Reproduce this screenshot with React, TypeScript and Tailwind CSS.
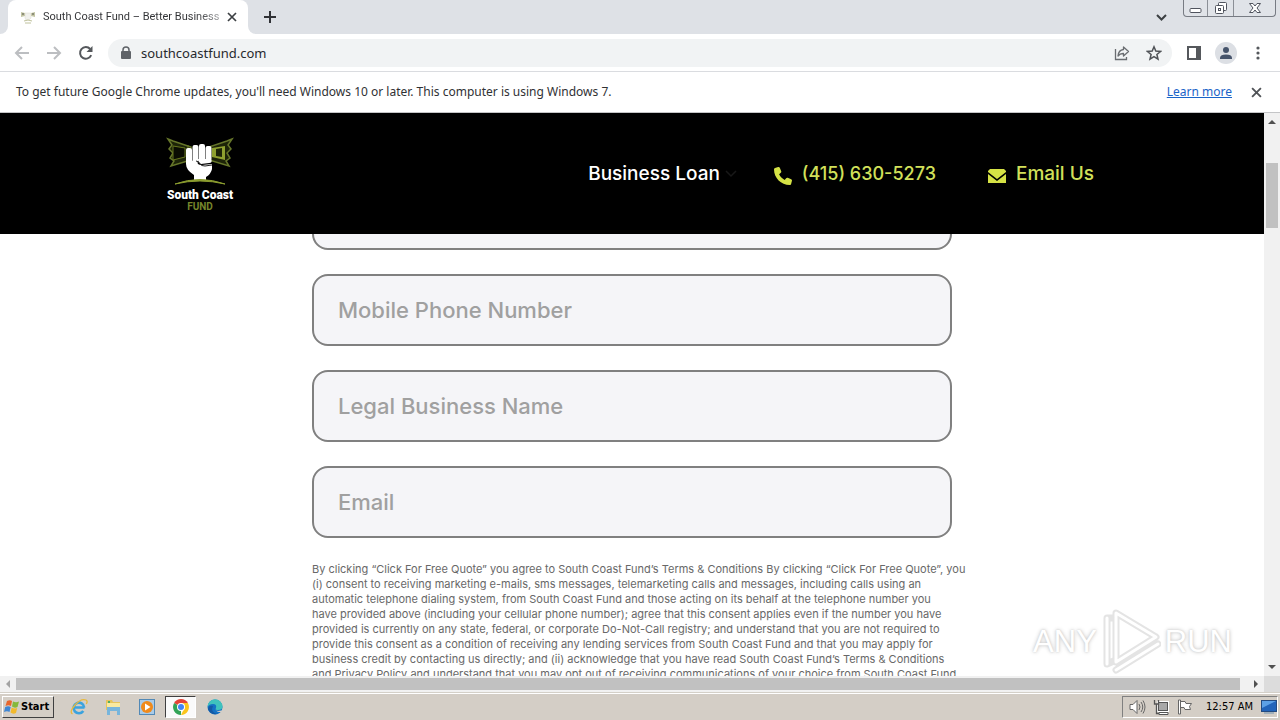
import type { ReactNode } from "react";

const consentLines = [
  "By clicking “Click For Free Quote” you agree to South Coast Fund’s Terms & Conditions By clicking “Click For Free Quote”, you",
  "(i) consent to receiving marketing e-mails, sms messages, telemarketing calls and messages, including calls using an",
  "automatic telephone dialing system, from South Coast Fund and those acting on its behalf at the telephone number you",
  "have provided above (including your cellular phone number); agree that this consent applies even if the number you have",
  "provided is currently on any state, federal, or corporate Do-Not-Call registry; and understand that you are not required to",
  "provide this consent as a condition of receiving any lending services from South Coast Fund and that you may apply for",
  "business credit by contacting us directly; and (ii) acknowledge that you have read South Coast Fund’s Terms & Conditions",
  "and Privacy Policy and understand that you may opt out of receiving communications of your choice from South Coast Fund",
];

function IconButton({ label, className = "", children }: { label: string; className?: string; children: ReactNode }) {
  return (
    <button type="button" aria-label={label} className={`flex shrink-0 items-center justify-center ${className}`}>
      {children}
    </button>
  );
}

function Cross({ size, color }: { size: number; color: string }) {
  return (
    <svg width={size} height={size} viewBox="0 0 10 10" fill="none" stroke={color} strokeWidth="1.7">
      <path d="M1 1l8 8M9 1L1 9" />
    </svg>
  );
}

function TabStrip() {
  return (
    <div className="flex h-[34px] shrink-0 items-start bg-[#dee1e6]">
      <div className="flex h-[34px] w-2 shrink-0 items-end bg-white">
        <div className="h-[34px] w-2 rounded-br-lg bg-[#dee1e6]" />
      </div>
      <div className="flex h-[34px] w-60 shrink-0 items-center rounded-t-lg bg-white pr-[6px] pl-3">
        <svg className="shrink-0" width="16" height="16" viewBox="0 0 16 16">
          <path d="M1 3l4 1v3L1 8zM15 3l-4 1v3l4 1z" fill="#c3c5a4" />
          <path d="M2 4h2v2H2zM12 4h2v2h-2z" fill="#8d8f7a" />
          <path d="M5 4h6v5l-2 2H6L5 9z" fill="#f1f1ed" stroke="#d9dbce" strokeWidth=".5" />
          <path d="M4 12q4-2 8 0M5 14h6" stroke="#c0c29d" fill="none" />
        </svg>
        <span className="ml-[7px] min-w-0 flex-1 bg-linear-to-r from-[#303134] from-85% to-[#b0b1b3] bg-clip-text font-['Roboto','Liberation_Sans',sans-serif] text-[11px] leading-4 whitespace-nowrap text-transparent">
          South Coast Fund – Better Business
        </span>
        <IconButton label="Close tab" className="size-5">
          <Cross size={10} color="#3c4043" />
        </IconButton>
      </div>
      <div className="flex h-[34px] w-2 shrink-0 bg-white">
        <div className="h-[34px] w-2 rounded-bl-lg bg-[#dee1e6]" />
      </div>
      <IconButton label="New tab" className="h-[34px] w-7">
        <svg width="12" height="12" viewBox="0 0 12 12" stroke="#303236" strokeWidth="2">
          <path d="M6 0v12M0 6h12" />
        </svg>
      </IconButton>
      <div className="flex-1" />
      <IconButton label="Search tabs" className="h-[34px] w-7">
        <svg width="11" height="7" viewBox="0 0 11 7" fill="none" stroke="#3c4043" strokeWidth="2">
          <path d="M1 1l4.500 4.500L10 1" />
        </svg>
      </IconButton>
      <div className="mr-1 ml-2 flex h-[17px] rounded-b border border-t-0 border-[#777b83] bg-[#e0e3e8]">
        <IconButton label="Minimize" className="w-6 border-r border-[#8b8f96]">
          <svg width="13" height="16" viewBox="0 0 13 16">
            <rect x="1" y="8.500" width="11" height="4" rx="1" fill="#fff" stroke="#50545e" />
          </svg>
        </IconButton>
        <IconButton label="Restore" className="w-[26px] border-r border-[#8b8f96]">
          <svg width="14" height="16" viewBox="0 0 14 16" fill="#fff" stroke="#50545e">
            <rect x="4.500" y="2.500" width="8" height="8" rx="1" />
            <rect x="1.500" y="5.500" width="8" height="8" rx="1" />
            <rect x="4.500" y="8.500" width="2" height="2" />
          </svg>
        </IconButton>
        <IconButton label="Close" className="w-[41px]">
          <svg width="14" height="16" viewBox="0 0 14 16" fill="#fff" stroke="#50545e">
            <path d="M1.500 3.500h3.500l2 2.500 2-2.500h3.500L9 8l3.500 4.500H9L7 10l-2 2.500H1.500L5 8z" />
          </svg>
        </IconButton>
      </div>
    </div>
  );
}

function Toolbar() {
  return (
    <div className="flex h-[38px] shrink-0 items-center border-b border-[#dadce0] bg-white pr-3 pl-[14px]">
      <IconButton label="Back" className="size-4">
        <svg width="16" height="14" viewBox="0 0 16 14" fill="none" stroke="#bcbec1" strokeWidth="2">
          <path d="M15 7H2M8 1L2 7l6 6" />
        </svg>
      </IconButton>
      <IconButton label="Forward" className="ml-4 size-4">
        <svg width="16" height="14" viewBox="0 0 16 14" fill="none" stroke="#bcbec1" strokeWidth="2">
          <path d="M1 7h13M8 1l6 6-6 6" />
        </svg>
      </IconButton>
      <IconButton label="Reload" className="ml-4 size-4">
        <svg width="16" height="16" viewBox="0 0 16 16">
          <path d="M13.200 10.200A5.800 5.800 0 1 1 12.200 4" fill="none" stroke="#55585c" strokeWidth="2" />
          <path d="M14.500 1v6h-6z" fill="#55585c" />
        </svg>
      </IconButton>
      <div className="ml-[14px] flex h-7 flex-1 items-center rounded-full bg-[#f1f3f4] pr-[10px] pl-3">
        <svg width="12" height="14" viewBox="0 0 12 14">
          <path d="M3 6V4a3 3 0 0 1 6 0v2" fill="none" stroke="#5f6368" strokeWidth="1.500" />
          <rect x="1" y="5" width="10" height="8" rx="1" fill="#5f6368" />
        </svg>
        <input
          aria-label="Address"
          defaultValue="southcoastfund.com"
          className="ml-[9px] min-w-0 flex-1 bg-transparent text-[13px] leading-5 text-[#27292d] outline-none"
        />
        <IconButton label="Share" className="size-4">
          <svg width="16" height="16" viewBox="0 0 16 16" fill="none" stroke="#6a6d71" strokeWidth="1.300">
            <path d="M1.500 4v10.500h11V12" />
            <path d="M9.500 2l5 4.500-5 4.500V8.500Q6 8.300 4 11q.5-6 5.500-6.500z" strokeLinejoin="round" />
          </svg>
        </IconButton>
        <IconButton label="Bookmark" className="ml-4 size-4">
          <svg width="16" height="16" viewBox="0 0 16 16" fill="none" stroke="#505357" strokeWidth="1.500">
            <path d="M8 1.800l1.800 4.300 4.700.4-3.600 3 1.100 4.600L8 11.600l-4 2.500 1.100-4.600-3.600-3 4.700-.4z" />
          </svg>
        </IconButton>
      </div>
      <IconButton label="Side panel" className="ml-[14px] size-4">
        <svg width="16" height="16" viewBox="0 0 16 16">
          <rect x="2" y="2" width="12" height="12" fill="none" stroke="#55585c" strokeWidth="2" />
          <path d="M10 2h5v12h-5z" fill="#55585c" />
        </svg>
      </IconButton>
      <IconButton label="Profile" className="ml-[13px] size-[22px] rounded-full bg-[#dcdfe4]">
        <svg width="14" height="14" viewBox="0 0 14 14" fill="#46546b">
          <circle cx="7" cy="4" r="3" />
          <path d="M1 13v-1.500Q1.500 8.500 7 8.500t6 3V13z" />
        </svg>
      </IconButton>
      <IconButton label="Menu" className="ml-[11px] size-5">
        <svg width="4" height="14" viewBox="0 0 4 14" fill="#55585c">
          <circle cx="2" cy="2" r="1.600" />
          <circle cx="2" cy="7" r="1.600" />
          <circle cx="2" cy="12" r="1.600" />
        </svg>
      </IconButton>
    </div>
  );
}

function InfoBar() {
  return (
    <div className="flex h-[41px] shrink-0 items-center border-b border-[#c4c5c7] bg-white pr-[14px] pl-4 text-[12px] text-[#303134]">
      <p className="flex-1 whitespace-nowrap">
        To get future Google Chrome updates, you'll need Windows 10 or later. This computer is using Windows 7.
      </p>
      <a href="#learn" className="text-[#1a64c8] underline">
        Learn more
      </a>
      <IconButton label="Dismiss" className="ml-[14px] size-5">
        <Cross size={11} color="#505357" />
      </IconButton>
    </div>
  );
}

function Logo() {
  return (
    <a href="#home" className="flex w-20 flex-col items-center">
      <svg className="mt-[2px]" width="72" height="50" viewBox="0 0 72 50">
        <g fill="#1d2408" stroke="#66762a" strokeWidth="1.500">
          <path d="M4 2l5 2 18 6v13L7 29l3-5-4-3 3-5-4-4 3-4z" />
          <path d="M68 2l-5 2-18 6v13l20 6-3-5 4-3-3-5 4-4-3-4z" />
        </g>
        <path d="M9 9l12 2v9L9 23zM24 8v16" fill="#0a0c02" stroke="#67771e" />
        <path d="M48 11l13-2v14l-13-3z" fill="#8fa12f" />
        <path d="M52 12l6-1v9l-6-1z" fill="#1d2408" />
        <g fill="#fff">
          <rect x="22" y="11" width="6" height="15" rx="2" />
          <rect x="28.500" y="8" width="6" height="17" rx="2" />
          <rect x="35" y="7" width="6" height="17" rx="2" />
          <rect x="41.500" y="9" width="6" height="15" rx="2" />
          <path d="M22 23l12 1q-2 4 4 4l10-1v5q-1 5-6 8v3H30v-5q-8-5-8-11z" />
          <path d="M34 22h13q2 4-2 4l-8 1q-3-1-3-5z" />
        </g>
        <path d="M32 24q3 0 4 3 1 2 5 2l7-1" fill="none" stroke="#222" />
        <path d="M11 47Q36 38 61 47 36 41 11 47z" fill="#8b9c2f" stroke="#8b9c2f" />
      </svg>
      <span className="mt-[2px] font-['Roboto','Liberation_Sans',sans-serif] text-[12px] leading-3 font-black whitespace-nowrap text-white">South Coast</span>
      <span className="font-['Roboto','Liberation_Sans',sans-serif] text-[10px] leading-3 font-bold text-[#76862b]">FUND</span>
    </a>
  );
}

function SiteHeader() {
  return (
    <header className="flex h-[121px] shrink-0 items-center bg-black pr-[170px] pl-40 font-['Inter','Liberation_Sans',sans-serif] text-[19px] leading-6 font-medium">
      <Logo />
      <nav className="ml-auto flex items-center whitespace-nowrap">
        <a href="#loan" className="flex items-center gap-1 text-white">
          Business Loan
          <svg width="14" height="8" viewBox="0 0 14 8" fill="none" stroke="#181818" strokeWidth="1.500">
            <path d="M2 1l5 5 5-5" />
          </svg>
        </a>
        <a href="tel:4156305273" className="ml-9 flex items-center gap-[10px] text-[18px] text-[#d2e05a]">
          <svg className="mt-1" width="18" height="18" viewBox="0 0 512 512" fill="#d5e245">
            <path d="M164.900 24.600c-7.700-18.600-28-28.500-47.400-23.200l-88 24C12.100 30.200 0 46 0 64c0 247.400 200.600 448 448 448 18 0 33.800-12.100 38.600-29.500l24-88c5.300-19.400-4.600-39.700-23.200-47.400l-96-40c-16.300-6.800-35.200-2.100-46.300 11.600L304.700 368C234.300 334.700 177.300 277.700 144 207.300l49.300-40.300c13.700-11.200 18.400-30 11.600-46.300z" />
          </svg>
          (415) 630-5273
        </a>
        <a href="mailto:info@southcoastfund.com" className="ml-[52px] flex items-center gap-[10px] text-[#d2e05a]">
          <svg className="mt-1" width="18" height="14" viewBox="0 0 18 14" fill="#d5e245">
            <path d="M2 0h14l2 2v1L9 10 0 3V2zM0 5l9 7 9-7v9H0z" />
          </svg>
          Email Us
        </a>
      </nav>
    </header>
  );
}

function Field({ label, type = "text" }: { label: string; type?: string }) {
  return (
    <input
      type={type}
      aria-label={label}
      placeholder={label}
      className="block h-[72px] w-full shrink-0 rounded-2xl border-2 border-[#808080] bg-[#f5f5f8] px-6 text-[22px] font-medium text-[#333333] placeholder:text-[#a0a0a0]"
    />
  );
}

function LeadForm() {
  return (
    <main className="min-h-0 flex-1 overflow-hidden bg-white font-['Inter','Liberation_Sans',sans-serif]">
      <form className="mx-auto -mt-14 flex w-full max-w-[640px] flex-col gap-6">
        <Field label="" />
        <Field label="Mobile Phone Number" type="tel" />
        <Field label="Legal Business Name" />
        <Field label="Email" type="email" />
        <p className="text-[11px] leading-[15px] text-[#686868]">
          {consentLines.map((line) => (
            <span key={line} className="block whitespace-nowrap">
              {line}
            </span>
          ))}
        </p>
      </form>
    </main>
  );
}

function VerticalScrollbar() {
  return (
    <div className="flex w-4 shrink-0 flex-col items-center bg-[#f1f1f1]">
      <svg className="shrink-0" width="16" height="17" viewBox="0 0 16 17" fill="#505050">
        <path d="M4 11l4-4 4 4z" />
      </svg>
      <div className="mt-[33px] h-[65px] w-3 bg-[#c1c1c1]" />
      <svg className="mt-auto shrink-0" width="16" height="17" viewBox="0 0 16 17" fill="#505050">
        <path d="M4 6l4 4 4-4z" />
      </svg>
    </div>
  );
}

function HorizontalScrollbar() {
  return (
    <div className="flex h-4 shrink-0 items-center bg-[#f1f1f1]">
      <svg width="16" height="16" viewBox="0 0 16 16" fill="#a3a3a3">
        <path d="M10 4L6 8l4 4z" />
      </svg>
      <div className="mr-2 h-3 flex-1 bg-[#c1c1c1]" />
      <svg width="16" height="16" viewBox="0 0 16 16" fill="#505050">
        <path d="M6 4l4 4-4 4z" />
      </svg>
      <div className="h-4 w-4 bg-[#dcdcdc]" />
    </div>
  );
}

function Watermark() {
  return (
    <div
      aria-hidden="true"
      className="pointer-events-none absolute right-12 bottom-0 flex h-[70px] items-center gap-1 font-['Liberation_Sans',sans-serif] text-[31px] leading-none text-white [text-shadow:0_0_4px_#c4c4c4,0_0_2px_#d4d4d4]"
    >
      <span>ANY</span>
      <svg width="60" height="66" viewBox="0 0 60 66" fill="none" strokeLinejoin="round" strokeLinecap="round">
        <g stroke="#e4e4e4" strokeWidth="7">
          <path d="M15 54V5l40 24M13 10H6v46l9-4M15 62l42-26M55 29L15 54" />
        </g>
        <g stroke="#fff" strokeWidth="3">
          <path d="M15 54V5l40 24L15 54M6 10v46M15 62l42-26" />
        </g>
      </svg>
      <span>RUN</span>
    </div>
  );
}

function Taskbar() {
  return (
    <footer className="flex h-7 shrink-0 items-center border-t border-[#d4d0c8] bg-[#d4cec6] px-[2px] shadow-[inset_0_1px_0_#ffffff]">
      <button
        type="button"
        className="flex h-[22px] w-[52px] items-center gap-px border border-t-white border-r-[#404040] border-b-[#404040] border-l-white pl-[1px] font-['DejaVu_Sans_Condensed','DejaVu_Sans',sans-serif] text-[11px] leading-4 font-bold text-black"
      >
        <svg className="shrink-0" width="16" height="16" viewBox="0 0 16 16">
          <path d="M3 2q3-1.500 5 0L7 7Q4.500 5.500 1.500 7z" fill="#e8662c" />
          <path d="M9 2.500q3 1.500 6 0L13.500 8q-3 1.500-5.500-.5z" fill="#85b83b" />
          <path d="M1.200 8q3-1.500 5.500 0l-1.200 5Q3 11.500 0 13z" fill="#3f86d3" />
          <path d="M7.700 8.500q3 1.500 5.500.5l-1.200 5q-3 1.500-5.500-.5z" fill="#f2b92c" />
        </svg>
        Start
      </button>
      <div className="ml-[10px] flex items-center">
        <IconButton label="Internet Explorer" className="h-[22px] w-[30px]">
          <svg width="18" height="18" viewBox="0 0 18 18" fill="none">
            <path d="M14.500 9.500H5M14.200 9.500A5.300 5.300 0 1 0 13.300 13" stroke="#3ba3de" strokeWidth="2.600" />
            <path d="M2.500 16Q-1 14 5 7T16 2q2 1 .3 4" stroke="#e8b93c" strokeWidth="1.300" />
          </svg>
        </IconButton>
        <IconButton label="File Explorer" className="ml-[4px] h-[22px] w-[30px]">
          <svg width="18" height="18" viewBox="0 0 18 18">
            <path d="M2 2h6l1 2h7v8H2z" fill="#e5c45d" />
            <path d="M3 5h13v6H3z" fill="#f8e9a0" />
            <path d="M4 3h2v2H4z" fill="#52ad60" />
            <path d="M3 9h13v8h-3v-4H6v4H3z" fill="#77b5dc" />
          </svg>
        </IconButton>
        <IconButton label="Media Player" className="ml-[4px] h-[22px] w-[30px]">
          <svg width="16" height="16" viewBox="0 0 16 16">
            <rect x=".5" y=".5" width="15" height="15" fill="#a9cbe8" stroke="#5289b6" />
            <circle cx="8" cy="8" r="6" fill="#f08a1b" />
            <path d="M6 4.500L11.500 8 6 11.500z" fill="#fff" />
          </svg>
        </IconButton>
        <IconButton label="Chrome" className="ml-[3px] h-[22px] w-[31px] border border-t-[#404040] border-r-white border-b-white border-l-[#404040] bg-[#fafafa]">
          <svg width="16" height="16" viewBox="0 0 16 16">
            <path d="M8 8L1.100 4A8 8 0 0 1 14.900 4z" fill="#e54336" />
            <path d="M8 8L1.100 4A8 8 0 0 0 8 16z" fill="#33a457" />
            <path d="M8 8h4L8 16a8 8 0 0 0 6.900-12H8z" fill="#fbc51b" />
            <circle cx="8" cy="8" r="4" fill="#fff" />
            <circle cx="8" cy="8" r="3" fill="#4285f4" />
          </svg>
        </IconButton>
        <IconButton label="Edge" className="ml-[4px] h-[22px] w-[30px]">
          <svg width="16" height="16" viewBox="0 0 16 16">
            <circle cx="8" cy="8" r="7.500" fill="#1471c4" />
            <path d="M.5 8A7.500 7.500 0 0 1 15.500 7.500Q15.500 11 11 11q-3 0-2-2 1-4-3-4-4 0-5.500 3z" fill="#3fc2bd" />
            <path d="M6 7q-3 6 4 8Q3 16 1 10q1-4 5-3z" fill="#1459a5" />
            <path d="M8.500 9q-1 4 6 2.500l1.500 1.500-4 0Q8 12 8.500 9z" fill="#d4cec6" />
          </svg>
        </IconButton>
      </div>
      <div className="ml-auto flex h-[22px] items-center border border-t-[#808080] border-r-white border-b-white border-l-[#808080] pl-[6px]">
        <svg width="17" height="16" viewBox="0 0 17 16" fill="#fff" stroke="#666">
          <path d="M1 5.500h3l4-4v13l-4-4H1z" />
          <path d="M10 5q2 3 0 6M12 3q3.500 5 0 10M14 1.500q4 6.500 0 13" fill="none" />
        </svg>
        <svg className="ml-[7px]" width="16" height="16" viewBox="0 0 16 16" fill="#fff" stroke="#555">
          <rect x="5.500" y="3.500" width="9" height="8" fill="#a8a8a8" stroke="#fff" strokeWidth="3" />
          <rect x="5.500" y="3.500" width="9" height="8" fill="#a8a8a8" />
          <path d="M6 13.500h9v2H6z" />
          <path d="M1.500 1v4h4V1M3.500 5v9.500H6" fill="none" strokeWidth="1.300" />
        </svg>
        <svg className="ml-2" width="16" height="16" viewBox="0 0 16 16" fill="#fff" stroke="#666">
          <path d="M3.500 2.500H8l1 2h5.500l-2 3 1 3H8l-1-2H3.500z" />
          <path d="M1.500 1h2v14h-2z" />
        </svg>
        <time className="ml-[13px] font-['DejaVu_Sans_Condensed','DejaVu_Sans',sans-serif] text-[11px] leading-4 whitespace-nowrap text-black">12:57 AM</time>
        <svg className="ml-2" width="16" height="14" viewBox="0 0 16 14">
          <rect x=".5" y=".5" width="15" height="11" fill="#2264ba" stroke="#244b80" />
          <path d="M1 1h14L1 8z" fill="#5da1e6" />
          <path d="M3 13h10" stroke="#a1b0bb" strokeWidth="2" />
        </svg>
      </div>
    </footer>
  );
}

export default function App() {
  return (
    <div className="flex h-screen flex-col overflow-hidden bg-white font-['Noto_Sans','Liberation_Sans',sans-serif]">
      <TabStrip />
      <Toolbar />
      <InfoBar />
      <div className="relative flex min-h-0 flex-1">
        <div className="flex min-w-0 flex-1 flex-col">
          <SiteHeader />
          <LeadForm />
        </div>
        <VerticalScrollbar />
        <Watermark />
      </div>
      <HorizontalScrollbar />
      <Taskbar />
    </div>
  );
}
